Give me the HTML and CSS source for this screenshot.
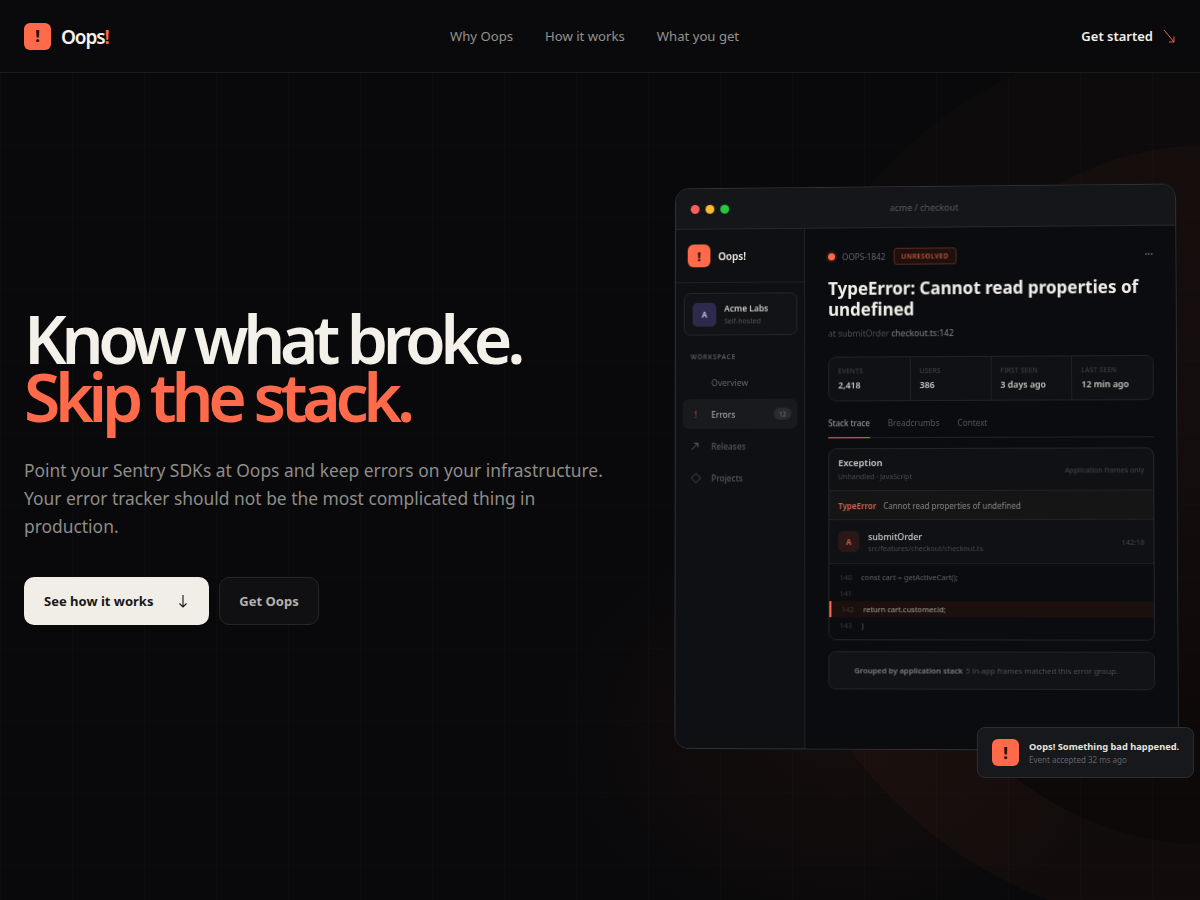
FILE: index.html
```html
<!DOCTYPE html>
<html>

    <head>
        <title>Oops!</title>
        <link rel="stylesheet" href="styles.css">
    </head>

    <body>
        <div class="backdrop">
            <div class="glow-soft"></div>
            <div class="glow-outer"></div>
            <div class="glow-inner"></div>
            <div class="grid-bg"></div>
        </div>

        <header class="topbar">
            <a class="brand">
                <span class="logo">!</span>
                <span class="brand-name">Oops<em>!</em></span>
            </a>
            <nav class="top-links">
                <a>Why Oops</a>
                <a>How it works</a>
                <a>What you get</a>
            </nav>
            <a class="top-cta">Get started
                <svg width="14" height="16" viewBox="0 0 14 16" fill="none" stroke="#e8604a" stroke-width="1">
                    <path d="M2 2 L12 14 M12 8.5 V14 H7"/>
                </svg>
            </a>
        </header>

        <main class="hero">
            <section class="copy">
                <h1>Know what broke.<br><span>Skip the stack.</span></h1>
                <p>Point your Sentry SDKs at Oops and keep errors on your infrastructure. Your error tracker should not be the most complicated thing in production.</p>
                <div class="actions">
                    <a class="btn btn-light">See how it works
                        <svg width="10" height="14" viewBox="0 0 10 14" fill="none" stroke="#17171a" stroke-width="1.1">
                            <path d="M5 1 V13 M1.5 9.5 L5 13 L8.5 9.5"/>
                        </svg>
                    </a>
                    <a class="btn btn-dark">Get Oops</a>
                </div>
            </section>

            <section class="stage">
                <div class="window">
                    <div class="titlebar">
                        <div class="dots"><i class="red"></i><i class="amber"></i><i class="green"></i></div>
                        <div class="crumb">acme / checkout</div>
                    </div>
                    <div class="app">
                        <aside class="sidebar">
                            <div class="side-brand"><span class="logo small">!</span><strong>Oops!</strong></div>
                            <div class="org">
                                <span class="org-badge">A</span>
                                <div><b>Acme Labs</b><small>Self-hosted</small></div>
                            </div>
                            <div class="side-label">WORKSPACE</div>
                            <a class="side-item"><i></i>Overview</a>
                            <a class="side-item active"><i class="bang">!</i>Errors<span class="count">12</span></a>
                            <a class="side-item"><i>
                                <svg width="9" height="9" viewBox="0 0 9 9" fill="none" stroke="#5a5b5f" stroke-width="1">
                                    <path d="M1 8 L7.5 1.5 M3.5 1.5 H7.5 V5.5"/>
                                </svg>
                            </i>Releases</a>
                            <a class="side-item"><i>
                                <svg width="11" height="11" viewBox="0 0 11 11" fill="none" stroke="#4a4b4f" stroke-width="1">
                                    <path d="M5.5 0.8 L10.2 5.5 L5.5 10.2 L0.8 5.5 Z"/>
                                </svg>
                            </i>Projects</a>
                        </aside>
                        <div class="detail">
                            <div class="issue-row">
                                <span class="pulse"></span>
                                <span class="issue-id">OOPS-1842</span>
                                <span class="tag">UNRESOLVED</span>
                                <span class="more">···</span>
                            </div>
                            <h2>TypeError: Cannot read properties of undefined</h2>
                            <div class="where">at submitOrder <span>checkout.ts:142</span></div>
                            <div class="stats">
                                <div><small>EVENTS</small><b>2,418</b></div>
                                <div><small>USERS</small><b>386</b></div>
                                <div><small>FIRST SEEN</small><b>3 days ago</b></div>
                                <div><small>LAST SEEN</small><b>12 min ago</b></div>
                            </div>
                            <div class="tabs">
                                <a class="on">Stack trace</a>
                                <a>Breadcrumbs</a>
                                <a>Context</a>
                            </div>
                            <div class="trace">
                                <div class="trace-head">
                                    <div><b>Exception</b><small>Unhandled · JavaScript</small></div>
                                    <span>Application frames only</span>
                                </div>
                                <div class="trace-type"><b>TypeError</b>Cannot read properties of undefined</div>
                                <div class="frame">
                                    <span class="frame-badge">A</span>
                                    <div><b>submitOrder</b><small>src/features/checkout/checkout.ts</small></div>
                                    <span class="pos">142:18</span>
                                </div>
                                <div class="code">
                                    <div class="line"><i>140</i>const cart = getActiveCart();</div>
                                    <div class="line"><i>141</i></div>
                                    <div class="line hot"><i>142</i>return cart.customer.id;</div>
                                    <div class="line"><i>143</i>}</div>
                                </div>
                            </div>
                            <div class="grouped"><b>Grouped by application stack</b> 5 in-app frames matched this error group.</div>
                        </div>
                    </div>
                </div>

                <div class="toast">
                    <span class="logo">!</span>
                    <div><b>Oops! Something bad happened.</b><small>Event accepted 32 ms ago</small></div>
                </div>
            </section>
        </main>
    </body>

</html>
```

FILE: styles.css
```css
* {
    box-sizing: border-box;
}

html, body {
    margin: 0;
    height: 900px;
    overflow: hidden;
}

body {
    position: relative;
    font-family: "Noto Sans", sans-serif;
    background-color: #09090b;
    color: #f4f1ea;
}

.backdrop {
    position: absolute;
    inset: 0;
    overflow: hidden;
}

.grid-bg {
    position: absolute;
    inset: 0;
    background-image:
        linear-gradient(to right, rgba(255,255,255,0.012) 1px, transparent 1px),
        linear-gradient(to bottom, rgba(255,255,255,0.008) 1px, transparent 1px);
    background-size: 72px 72px;
}

.glow-soft,
.glow-outer,
.glow-inner {
    position: absolute;
    border-radius: 50%;
}

.glow-soft {
    left: 560px;
    top: 520px;
    width: 560px;
    height: 420px;
    background: radial-gradient(closest-side, rgba(150,60,30,0.08), rgba(150,60,30,0.045) 60%, transparent);
}

.glow-outer {
    left: 760px;
    top: 30px;
    width: 900px;
    height: 900px;
    background: linear-gradient(to bottom, rgba(170,70,40,0.025), rgba(170,70,40,0.055));
}

.glow-inner {
    left: 880px;
    top: 145px;
    width: 660px;
    height: 700px;
    background: linear-gradient(to bottom, rgba(170,70,40,0.05) 0%, rgba(170,70,40,0.02) 50%, #0d0908 85%);
}

/* top bar */
.topbar {
    position: relative;
    height: 73px;
    padding: 0 24px;
    display: flex;
    align-items: center;
    background-color: #0a0a0c;
    border-bottom: 1px solid #1c1c1e;
}

.brand {
    display: flex;
    align-items: center;
    gap: 10px;
    width: 426px;
}

.logo {
    display: flex;
    align-items: center;
    justify-content: center;
    width: 27px;
    height: 27px;
    border-radius: 6px;
    background-color: #ff6b4a;
    color: #1a0b07;
    font-size: 16px;
    font-weight: 800;
}

.brand-name {
    font-size: 19px;
    font-weight: 600;
    letter-spacing: -0.06em;
    padding-top: 1px;
}

.brand-name em {
    font-style: normal;
    color: #ff6b4a;
}

.top-links {
    display: flex;
    gap: 32px;
    font-size: 13.15px;
    color: #94928d;
}

.top-cta {
    margin-left: auto;
    font-size: 13px;
    font-weight: 600;
    display: flex;
    gap: 9px;
    align-items: center;
}

/* hero */
.hero {
    position: relative;
    height: 788px;
    padding: 0 24px;
    display: flex;
    align-items: center;
    justify-content: space-between;
}

.copy {
    width: 590px;
}

h1 {
    margin: 0;
    font-size: 66px;
    line-height: 58px;
    font-weight: 600;
    letter-spacing: -0.08em;
}

h1 span {
    color: #ff6b4a;
}

.copy p {
    margin: 31px 0 0;
    font-size: 17.4px;
    line-height: 28.2px;
    color: #8f8d88;
}

.actions {
    margin-top: 37px;
    display: flex;
    gap: 10px;
}

.btn {
    height: 48px;
    display: flex;
    align-items: center;
    border-radius: 10px;
    font-size: 13px;
    font-weight: 700;
}

.btn-light {
    width: 185px;
    padding: 0 21px 0 20px;
    justify-content: space-between;
    background-color: #f1eee7;
    color: #17171a;
}

.btn-dark {
    width: 100px;
    justify-content: center;
    background-color: #101013;
    border: 1px solid #26262a;
    color: #b4b2ac;
}

/* app window */
.stage {
    position: relative;
    width: 503px;
}

.window {
    height: 564px;
    border: 1px solid #303136;
    border-radius: 14px;
    background-color: #0b0c10;
    overflow: hidden;
    outline: 1px solid transparent;
    will-change: transform;
    transform: perspective(1400px) rotateY(-2deg) rotateX(1deg) rotateZ(-0.15deg);
}

.titlebar {
    position: relative;
    height: 41px;
    padding: 0 15px;
    display: flex;
    align-items: center;
    background-color: #15161a;
    border-bottom: 1px solid #26272b;
}

.dots {
    display: flex;
    gap: 6px;
}

.dots i {
    width: 9px;
    height: 9px;
    border-radius: 50%;
}

.red { background-color: #ff5f57; }
.amber { background-color: #febc2e; }
.green { background-color: #28c840; }

.crumb {
    position: absolute;
    left: 0;
    right: 0;
    text-align: center;
    font-size: 9px;
    color: #5c5d61;
}

.app {
    display: flex;
    height: 522px;
}

.sidebar {
    width: 131px;
    padding: 0 7px 0 8px;
    background-color: #0f1014;
    border-right: 1px solid #26272b;
    flex-shrink: 0;
}

.side-brand {
    height: 54px;
    margin: 0 -7px 0 -8px;
    padding: 0 12px;
    display: flex;
    align-items: center;
    gap: 8px;
    border-bottom: 1px solid #1f2024;
    font-size: 10px;
}

.side-brand strong {
    font-weight: 600;
}

.logo.small {
    width: 23px;
    height: 23px;
    font-size: 13px;
    border-radius: 6px;
}

.org {
    margin-top: 10px;
    height: 43px;
    padding: 0 8px;
    display: flex;
    align-items: center;
    gap: 8px;
    border: 1px solid #25262a;
    border-radius: 7px;
    background-color: #121317;
}

.org-badge {
    width: 24px;
    height: 24px;
    border-radius: 5px;
    background-color: #2e2a4e;
    color: #b9b4e8;
    display: flex;
    align-items: center;
    justify-content: center;
    font-size: 8px;
    font-weight: 700;
}

.org b {
    display: block;
    font-size: 8.5px;
    font-weight: 600;
    color: #c9c8c4;
    line-height: 13px;
}

.org small {
    display: block;
    margin-top: 2px;
    font-size: 7px;
    color: #55565a;
    line-height: 10px;
}

.side-label {
    margin: 17px 7px 6px;
    font-size: 6.5px;
    font-weight: 600;
    letter-spacing: 0.12em;
    color: #5c5d61;
}

.side-item {
    height: 30px;
    margin: 0 0 2px -1px;
    padding: 0 6px 0 8px;
    display: flex;
    align-items: center;
    border-radius: 6px;
    font-size: 8.5px;
    color: #626367;
}

.side-item i {
    width: 21px;
    height: 11px;
    display: flex;
    align-items: center;
    font-style: normal;
}

.side-item.active {
    background-color: #191a1e;
    color: #b8b7b3;
}

.side-item i.bang {
    color: #c0553c;
    font-size: 9px;
    padding-left: 4px;
}

.count {
    margin-left: auto;
    width: 18px;
    height: 12px;
    border-radius: 6px;
    background-color: #2a2b2f;
    color: #727377;
    font-size: 6.5px;
    display: flex;
    align-items: center;
    justify-content: center;
}

.detail {
    flex: 1;
    padding: 19px 22px 0 23px;
    background-color: #0b0c10;
}

.issue-row {
    height: 18px;
    display: flex;
    align-items: center;
    font-size: 8.2px;
    color: #626367;
}

.pulse {
    width: 7px;
    height: 7px;
    border-radius: 50%;
    background-color: #ff6b4a;
    margin-right: 7px;
    box-shadow: 0 0 0 2px rgba(255,107,74,0.15);
}

.tag {
    margin-left: 8px;
    padding: 0 7px;
    height: 17px;
    display: flex;
    align-items: center;
    border: 1px solid #5a2a20;
    border-radius: 3px;
    background-color: #1f100d;
    color: #c4583f;
    font-size: 6.5px;
    font-weight: 600;
    letter-spacing: 0.08em;
}

.more {
    margin-left: auto;
    color: #6e6f73;
    font-size: 10px;
    font-weight: 700;
}

h2 {
    margin: 13px 0 0;
    font-size: 17px;
    line-height: 21px;
    font-weight: 700;
    color: #f0eee8;
}

.where {
    margin-top: 8px;
    font-size: 8.5px;
    line-height: 12px;
    color: #4c4d51;
}

.where span {
    color: #868684;
}

.stats {
    margin-top: 17px;
    height: 45px;
    display: grid;
    grid-template-columns: repeat(4, 1fr);
    border: 1px solid #222327;
    border-radius: 8px;
    background-color: #101115;
}

.stats div {
    padding: 9px 9px 0;
    border-left: 1px solid #1f2024;
}

.stats div:first-child {
    border-left: 0;
}

.stats small {
    display: block;
    font-size: 6.5px;
    line-height: 10px;
    letter-spacing: 0.05em;
    color: #47484c;
}

.stats b {
    display: block;
    margin-top: 3px;
    font-size: 8.8px;
    line-height: 12px;
    font-weight: 600;
    color: #c9c8c4;
}

.tabs {
    margin-top: 16px;
    height: 21px;
    display: flex;
    gap: 18px;
    border-bottom: 1px solid #222327;
    font-size: 8.2px;
    color: #55565a;
}

.tabs a.on {
    color: #a3a29e;
    height: 21px;
    border-bottom: 1px solid #ff6b4a;
}

.trace {
    margin-top: 10px;
    border: 1px solid #25262a;
    border-radius: 8px;
    overflow: hidden;
    background-color: #101115;
}

.trace-head {
    height: 41px;
    padding: 0 9px;
    display: flex;
    align-items: center;
    justify-content: space-between;
    font-size: 7.1px;
    color: #47484c;
}

.trace-head b {
    display: block;
    font-size: 9.4px;
    line-height: 12px;
    font-weight: 600;
    color: #c9c8c4;
}

.trace-head small {
    display: block;
    margin-top: 3px;
    font-size: 7px;
    line-height: 10px;
    color: #47484c;
}

.trace-type {
    height: 30px;
    padding: 0 9px;
    display: flex;
    align-items: center;
    gap: 7px;
    border-top: 1px solid #222327;
    border-bottom: 1px solid #222327;
    background-color: #151516;
    font-size: 8px;
    color: #868684;
}

.trace-type b {
    font-weight: 600;
    color: #d9654b;
}

.frame {
    height: 43px;
    padding: 0 9px;
    display: flex;
    align-items: center;
    gap: 9px;
    font-size: 7.2px;
    color: #47484c;
}

.frame-badge {
    width: 21px;
    height: 21px;
    border-radius: 5px;
    background-color: #2a1816;
    color: #c4583f;
    font-size: 8px;
    font-weight: 700;
    display: flex;
    align-items: center;
    justify-content: center;
}

.frame b {
    display: block;
    font-size: 8.8px;
    line-height: 12px;
    font-weight: 500;
    color: #d0cfcb;
}

.frame small {
    display: block;
    font-size: 7.2px;
    line-height: 10px;
    color: #47484c;
}

.pos {
    margin-left: auto;
}

.code {
    padding: 5px 0 6px;
    background-color: #0b0c0f;
    border-top: 1px solid #1c1d21;
    font-size: 7.5px;
    color: #626367;
}

.line {
    height: 16px;
    padding-left: 10px;
    display: flex;
    align-items: center;
}

.line i {
    width: 22px;
    font-style: normal;
    color: #3a3b3f;
}

.line.hot {
    padding-left: 10px;
    border-left: 2px solid #ff6b4a;
    background-color: #1b100d;
    color: #a3a29e;
}

.grouped {
    margin-top: 11px;
    height: 38px;
    padding-left: 25px;
    display: flex;
    align-items: center;
    gap: 3px;
    border: 1px solid #222327;
    border-radius: 7px;
    background-color: #121317;
    font-size: 7.65px;
    color: #4f5054;
}

.grouped b {
    font-weight: 600;
    color: #808083;
}

/* toast */
.toast {
    position: absolute;
    right: -18px;
    bottom: -29px;
    width: 217px;
    height: 51px;
    padding: 0 10px 0 14px;
    display: flex;
    align-items: center;
    gap: 10px;
    border: 1px solid #2c2d31;
    border-radius: 8px;
    background-color: #17181b;
}

.toast .logo {
    flex-shrink: 0;
}

.toast b {
    display: block;
    font-size: 9.3px;
    line-height: 13px;
    font-weight: 700;
    white-space: nowrap;
    color: #e6e4de;
}

.toast small {
    display: block;
    margin-top: 1px;
    font-size: 8px;
    line-height: 11px;
    color: #626367;
}
```
